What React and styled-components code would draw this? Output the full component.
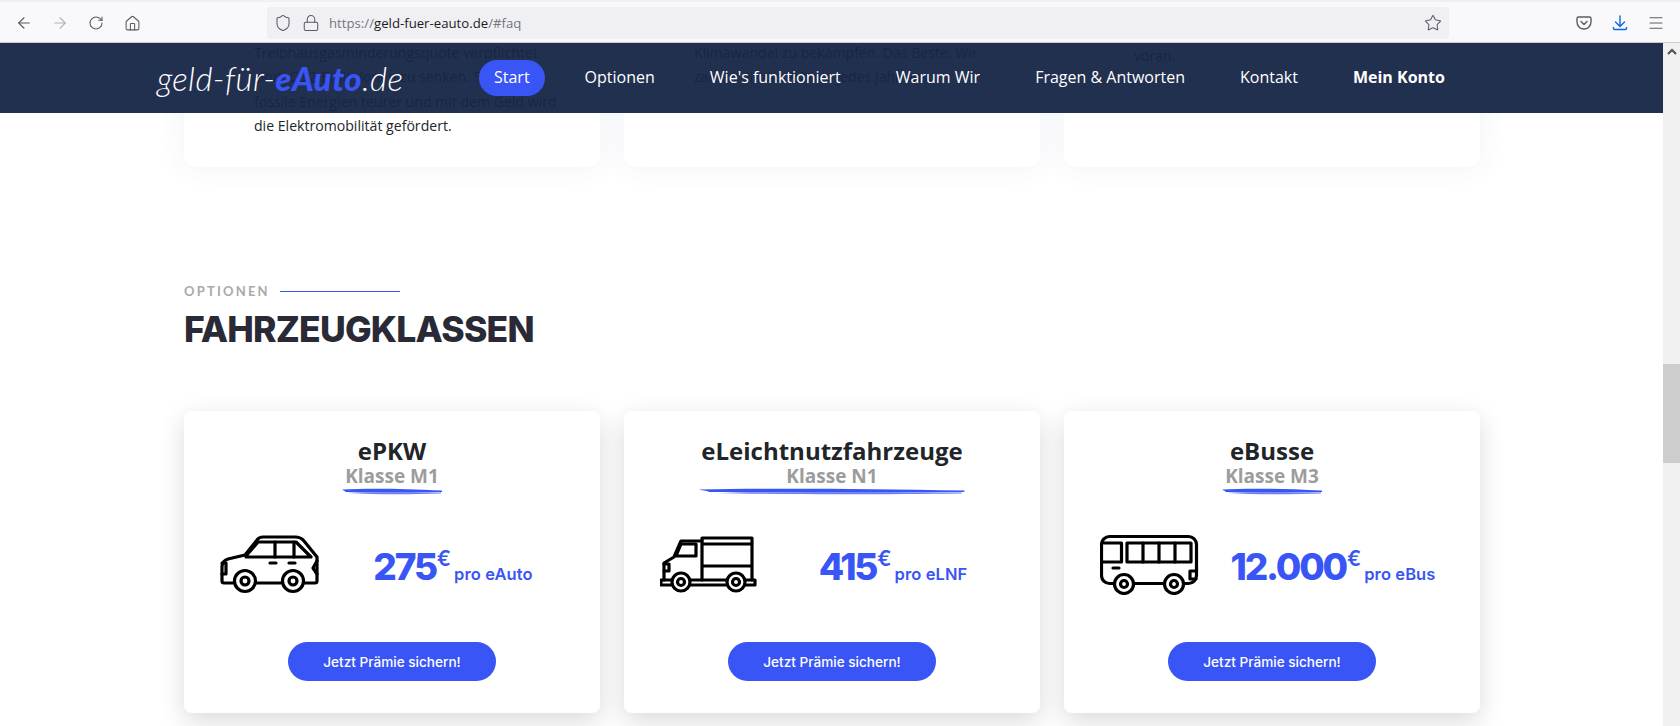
import React from 'react';
import styled, { createGlobalStyle } from 'styled-components';
import { ArrowLeft, ArrowRight, RotateCw, Home, Shield, Lock, Star, Menu } from 'lucide-react';

const Global = createGlobalStyle`
	html, body { margin: 0; padding: 0; height: 100%; overflow: hidden; background: #fff; }
	* { box-sizing: border-box; }
`;

const Window = styled.div`
	height: 100vh;
	display: flex;
	flex-direction: column;
	font-family: "Open Sans", sans-serif;
`;

const Toolbar = styled.header`
	flex: 0 0 43px;
	display: flex;
	align-items: center;
	padding: 2px 6px 0;
	background: #f9f9fb;
	border-top: 2px solid #f0f0f4;
	border-bottom: 1px solid #ccc;
`;

const ToolGroup = styled.div`
	display: flex;
	margin-left: ${(p) => (p.$end ? 'auto' : '0')};
`;

const ToolButton = styled.div`
	width: 36px;
	height: 32px;
	display: flex;
	align-items: center;
	justify-content: center;
	color: ${(p) => p.$color || '#5b5b66'};
`;

const UrlBar = styled.div`
	margin-left: 117px;
	width: 1182px;
	height: 32px;
	display: flex;
	align-items: center;
	padding: 0 7px 0 7px;
	border-radius: 4px;
	background: #f0f0f4;
	color: #5b5b66;
`;

const UrlIcon = styled.span`
	width: ${(p) => p.$w}px;
	display: flex;
	justify-content: center;
	flex: none;
`;

const UrlText = styled.span`
	flex: 1;
	font-size: 13.2px;
	color: #75757f;
`;

const Domain = styled.span`
	color: #1c1b22;
`;

const Viewport = styled.div`
	flex: 1;
	display: flex;
	min-height: 0;
`;

const Page = styled.main`
	position: relative;
	flex: 1;
	overflow: hidden;
	background: #fff;
`;

const NavBar = styled.nav`
	position: absolute;
	top: 0;
	left: 0;
	right: 0;
	height: 70px;
	display: flex;
	align-items: center;
	padding-left: 157px;
	background: rgba(22, 37, 71, 0.95);
	z-index: 2;
`;

const Logo = styled.div`
	width: 322px;
	font-family: "Lato", sans-serif;
	font-style: italic;
	font-weight: 300;
	font-size: 33px;
	letter-spacing: 0.4px;
	color: #fff;
	white-space: nowrap;
`;

const LogoAccent = styled.b`
	font-weight: 900;
	color: #3955f5;
`;

const NavLinks = styled.div`
	display: flex;
	align-items: center;
	gap: 25px;
`;

const NavLink = styled.a`
	height: 36px;
	display: flex;
	align-items: center;
	padding: 0 15px 2px;
	border-radius: 18px;
	font-size: 16px;
	font-weight: ${(p) => (p.$bold ? 700 : 400)};
	color: #fff;
	background: ${(p) => (p.$active ? '#3955f5' : 'transparent')};
	white-space: nowrap;
`;

const Scrollbar = styled.aside`
	flex: 0 0 17px;
	background: #f0f0f0;
	color: #505050;
`;

const ScrollArrow = styled.div`
	height: 17px;
	display: flex;
	align-items: center;
	justify-content: center;
`;

const ScrollThumb = styled.div`
	margin-top: 304px;
	height: 99px;
	background: #cdcdcd;
`;

const Content = styled.div`
	margin-top: -20px;
	padding-left: 184px;
	width: 1481px;
`;

const CardRow = styled.div`
	display: grid;
	grid-template-columns: repeat(3, 416px);
	gap: 24px;
`;

const InfoCard = styled.div`
	height: 144px;
	padding: ${(p) => p.$top}px 0 0 70px;
	background: #fff;
	border-radius: 0 0 12px 12px;
	box-shadow: 0 0 30px rgba(60, 70, 140, 0.07);
	font-size: 14.1px;
	line-height: 24.4px;
	color: #212529;
	white-space: nowrap;
	overflow: hidden;
`;

const SectionHead = styled.div`
	margin-top: 112px;
`;

const Eyebrow = styled.div`
	display: flex;
	align-items: center;
	gap: 10px;
	font-family: "Lato", sans-serif;
	font-size: 13px;
	font-weight: 700;
	letter-spacing: 2.2px;
	line-height: 24px;
	color: #aaa;

	&::after {
		content: "";
		width: 120px;
		height: 1px;
		background: #3955f5;
	}
`;

const Heading = styled.h2`
	margin: 2px 0 0;
	font-family: "Inter", sans-serif;
	font-size: 35.5px;
	font-weight: 800;
	line-height: 50px;
	letter-spacing: -0.8px;
	color: #2a2a37;
`;

const PriceRow = styled(CardRow)`
	margin-top: 56px;
`;

const PriceCard = styled.article`
	height: 302px;
	padding-top: 27px;
	display: flex;
	flex-direction: column;
	align-items: center;
	background: #fff;
	border-radius: 8px;
	box-shadow: 0 8px 26px rgba(0, 0, 0, 0.15);
`;

const TitleBlock = styled.div`
	display: flex;
	flex-direction: column;
	align-items: center;
	height: 57px;
`;

const Title = styled.h3`
	margin: 0;
	font-size: 24px;
	font-weight: 700;
	line-height: 26px;
	color: #212529;
`;

const Subtitle = styled.div`
	font-size: 19px;
	font-weight: 700;
	line-height: 24px;
	color: #9c9c9c;
`;

const Brush = styled.svg`
	display: block;
	width: calc(100% + 4px);
	height: 7px;
	margin: 0 -2px;
	flex: none;
`;

const Offer = styled.div`
	align-self: stretch;
	margin-top: 38px;
	display: grid;
	grid-template-columns: 100px 1fr;
	align-items: center;
	padding: 0 14px 0 36px;
`;

const Icon = styled.svg`
	display: block;
	width: 100px;
	height: 62px;
	fill: none;
	stroke: #000;
	stroke-width: 3.2;
	stroke-linejoin: round;
	stroke-linecap: round;

	circle { fill: #fff; }
`;

const Price = styled.div`
	padding-top: 5px;
	text-align: center;
	color: #3955f5;
	font-family: "Inter", sans-serif;
	white-space: nowrap;
`;

const Amount = styled.span`
	font-size: 37px;
	font-weight: 800;
	letter-spacing: -2.2px;
`;

const Euro = styled.span`
	font-size: 21px;
	font-weight: 600;
	vertical-align: 14px;
	margin: 0 3px 0 1px;
`;

const Per = styled.span`
	font-size: 16.5px;
	font-weight: 600;
	letter-spacing: 0.1px;
`;

const Cta = styled.a`
	margin-top: 47px;
	width: 208px;
	height: 39px;
	display: flex;
	align-items: center;
	justify-content: center;
	border-radius: 20px;
	background: #3955f5;
	color: #fff;
	font-family: "Inter", sans-serif;
	font-size: 13.6px;
	font-weight: 500;
`;

const CarIcon = () => (
	<Icon viewBox="0 0 100 62">
		<path d="M14 50H4q-2 0-2-2V34q0-6 6-8l17-4L37 7q2-3 6-3h32q6 0 9 4l13 16v24q0 2-2 2H84" />
		<path d="M61 50H37" />
		<path d="M26 23l12-14h38l15 15H26z" />
		<path d="M55 9v15M74 9v15M50 30h6M69 30h6" />
		<path d="M2 30h4v11H2M97 28l-4 7 4 6" />
		<circle cx="25" cy="48" r="10.5" />
		<circle cx="25" cy="48" r="4" />
		<circle cx="73" cy="48" r="10.5" />
		<circle cx="73" cy="48" r="4" />
	</Icon>
);

const TruckIcon = () => (
	<Icon viewBox="0 0 100 62">
		<path d="M42 47V5h50v42M42 11h50M42 33h50" />
		<path d="M42 8H21L14 24 4 30v17" />
		<path d="M21 11h15v12H16z" />
		<path d="M4 31h5v7H4" />
		<rect x="1" y="47" width="94" height="5" />
		<circle cx="21" cy="49" r="9" />
		<circle cx="21" cy="49" r="3.5" />
		<circle cx="76" cy="49" r="9" />
		<circle cx="76" cy="49" r="3.5" />
	</Icon>
);

const BusIcon = () => (
	<Icon viewBox="0 0 100 62">
		<rect x="1.5" y="3.5" width="95" height="47" rx="8" />
		<path d="M1.5 29h20V10H4" />
		<rect x="27" y="10" width="64" height="19" />
		<path d="M43 10v19M59 10v19M75 10v19M13 35h6" />
		<path d="M96 38h-6v8h6" />
		<circle cx="24" cy="51" r="9.5" />
		<circle cx="24" cy="51" r="3.5" />
		<circle cx="74" cy="51" r="9.5" />
		<circle cx="74" cy="51" r="3.5" />
	</Icon>
);

const BrushLine = () => (
	<Brush viewBox="0 0 100 7" preserveAspectRatio="none">
		<path d="M0 1.5C25 0 60 0.5 100 2.5L100 4C70 4.5 30 5 3 4C5 3.5 2 3 0 1.5z" fill="#3955f5" />
		<path d="M6 5C35 4.5 70 4.5 99 4.5L99 5.5C70 6.5 35 6.8 6 5z" fill="#3955f5" opacity="0.75" />
	</Brush>
);

const navItems = ['Optionen', "Wie's funktioniert", 'Warum Wir', 'Fragen & Antworten', 'Kontakt'];

const offers = [
	{ title: 'ePKW', sub: 'Klasse M1', amount: '275', per: 'pro eAuto', icon: <CarIcon /> },
	{ title: 'eLeichtnutzfahrzeuge', sub: 'Klasse N1', amount: '415', per: 'pro eLNF', icon: <TruckIcon /> },
	{ title: 'eBusse', sub: 'Klasse M3', amount: '12.000', per: 'pro eBus', icon: <BusIcon /> },
];

export default function App() {
	return (
		<Window>
			<Global />
			<Toolbar>
				<ToolGroup>
					<ToolButton><ArrowLeft size={18} strokeWidth={1.5} /></ToolButton>
					<ToolButton $color="#b4b4ba"><ArrowRight size={18} strokeWidth={1.5} /></ToolButton>
					<ToolButton><RotateCw size={16} strokeWidth={1.6} /></ToolButton>
					<ToolButton><Home size={17} strokeWidth={1.5} /></ToolButton>
				</ToolGroup>
				<UrlBar>
					<UrlIcon $w={18}><Shield size={18} strokeWidth={1.4} /></UrlIcon>
					<UrlIcon $w={37}><Lock size={18} strokeWidth={1.4} /></UrlIcon>
					<UrlText>https://<Domain>geld-fuer-eauto.de</Domain>/#faq</UrlText>
					<Star size={18} strokeWidth={1.4} />
				</UrlBar>
				<ToolGroup $end>
					<ToolButton>
						<svg width="16" height="16" viewBox="0 0 16 16" fill="none" stroke="currentColor" strokeWidth="1.4" strokeLinecap="round" strokeLinejoin="round">
							<path d="M2.5 2h11A1.5 1.5 0 0 1 15 3.5V7a7 7 0 0 1-14 0V3.5A1.5 1.5 0 0 1 2.5 2z" />
							<path d="M5 6.5L8 9.5L11 6.5" />
						</svg>
					</ToolButton>
					<ToolButton $color="#0a68de">
						<svg width="16" height="16" viewBox="0 0 16 16" fill="none" stroke="currentColor" strokeWidth="1.4" strokeLinecap="round" strokeLinejoin="round">
							<path d="M8 1v10M3.5 7L8 11.5L12.5 7M1.5 12.5v1q0 1 1 1h11q1 0 1-1v-1" />
						</svg>
					</ToolButton>
					<ToolButton><Menu size={18} strokeWidth={1.4} /></ToolButton>
				</ToolGroup>
			</Toolbar>
			<Viewport>
				<Page>
					<NavBar>
						<Logo>geld-für-<LogoAccent>eAuto</LogoAccent>.de</Logo>
						<NavLinks>
							<NavLink $active>Start</NavLink>
							{navItems.map((item) => (
								<NavLink key={item}>{item}</NavLink>
							))}
							<NavLink $bold>Mein Konto</NavLink>
						</NavLinks>
					</NavBar>
					<Content>
						<CardRow>
							<InfoCard $top={18}>
								Treibhausgasminderungsquote verpflichtet
								<br />sind, CO2-Emissionen zu senken. Somit
								<br />fossile Energien teurer und mit dem Geld wird
								<br />die Elektromobilität gefördert.
							</InfoCard>
							<InfoCard $top={18}>
								Klimawandel zu bekämpfen. Das Beste: Wir
								<br />zahlen dir die Prämie jedes Jahr aus.
							</InfoCard>
							<InfoCard $top={21}>voran.</InfoCard>
						</CardRow>
						<SectionHead>
							<Eyebrow>OPTIONEN</Eyebrow>
							<Heading>FAHRZEUGKLASSEN</Heading>
						</SectionHead>
						<PriceRow>
							{offers.map((offer) => (
								<PriceCard key={offer.title}>
									<TitleBlock>
										<Title>{offer.title}</Title>
										<Subtitle>{offer.sub}</Subtitle>
										<BrushLine />
									</TitleBlock>
									<Offer>
										{offer.icon}
										<Price>
											<Amount>{offer.amount}</Amount>
											<Euro>€</Euro>
											<Per>{offer.per}</Per>
										</Price>
									</Offer>
									<Cta>Jetzt Prämie sichern!</Cta>
								</PriceCard>
							))}
						</PriceRow>
					</Content>
				</Page>
				<Scrollbar>
					<ScrollArrow>
						<svg width="10" height="7" viewBox="0 0 10 7" fill="none" stroke="currentColor" strokeWidth="2"><path d="M1 6L5 2L9 6" /></svg>
					</ScrollArrow>
					<ScrollThumb />
				</Scrollbar>
			</Viewport>
		</Window>
	);
}
